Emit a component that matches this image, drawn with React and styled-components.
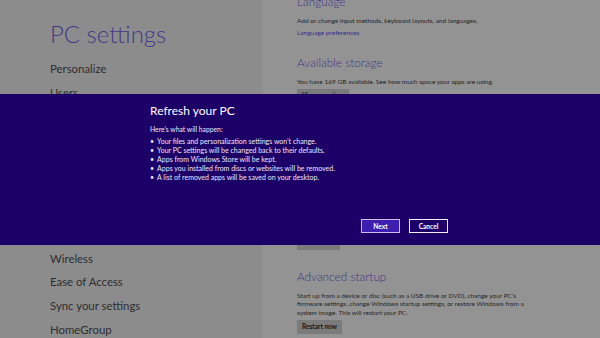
import React from "react"
import styled, { createGlobalStyle } from "styled-components"

const navItems = [
  "Personalize",
  "Users",
  "Notifications",
  "Search",
  "Share",
  "General",
  "Privacy",
  "Devices",
  "Wireless",
  "Ease of Access",
  "Sync your settings",
  "HomeGroup",
  "Windows Update",
]

const bullets = [
  "Your files and personalization settings won’t change.",
  "Your PC settings will be changed back to their defaults.",
  "Apps from Windows Store will be kept.",
  "Apps you installed from discs or websites will be removed.",
  "A list of removed apps will be saved on your desktop.",
]

const App = () => {
  return (
    <>
      <GlobalStyle />
      <Screen>
        <LeftPane>
          <Title>PC settings</Title>
          <Nav>
            {navItems.map((item) => (
              <NavItem key={item}>{item}</NavItem>
            ))}
          </Nav>
        </LeftPane>
        <RightPane>
          <Scroller>
            <Section>
              <Heading>Language</Heading>
              <Text>Add or change input methods, keyboard layouts, and languages.</Text>
              <Link>Language preferences</Link>
            </Section>
            <Section>
              <Heading>Available storage</Heading>
              <Text>You have 169 GB available. See how much space your apps are using.</Text>
              <GrayButton>View app sizes</GrayButton>
            </Section>
            <Section>
              <Heading>Refresh your PC without affecting your files</Heading>
              <Text>
                If your PC isn’t running well, you can refresh it without losing your photos,
                music, videos, and other personal files.
              </Text>
              <GrayButton>Get started</GrayButton>
            </Section>
            <Section last>
              <Heading>Remove everything and reinstall Windows</Heading>
              <Text>
                If you want to recycle your PC or start over completely, you can reset it to its
                factory settings.
              </Text>
              <GrayButton>Get started</GrayButton>
            </Section>
            <Section>
              <Heading>Advanced startup</Heading>
              <Text>
                Start up from a device or disc (such as a USB drive or DVD), change your PC’s
                firmware settings, change Windows startup settings, or restore Windows from a
                system image. This will restart your PC.
              </Text>
              <GrayButton>Restart now</GrayButton>
            </Section>
          </Scroller>
        </RightPane>

        <Overlay>
          <Band>
            <Dialog>
              <DialogTitle>Refresh your PC</DialogTitle>
              <Intro>Here’s what will happen:</Intro>
              <BulletList>
                {bullets.map((b) => (
                  <li key={b}>{b}</li>
                ))}
              </BulletList>
              <Actions>
                <DialogButton primary>Next</DialogButton>
                <DialogButton>Cancel</DialogButton>
              </Actions>
            </Dialog>
          </Band>
        </Overlay>
      </Screen>
    </>
  )
}

const GlobalStyle = createGlobalStyle`
  html, body {
    margin: 0;
    padding: 0;
    width: 600px;
    height: 338px;
    overflow: hidden;
    font-family: Lato, "Open Sans", sans-serif;
  }
`

const Screen = styled.div`
  position: relative;
  width: 600px;
  height: 338px;
  display: grid;
  grid-template-columns: 262px 1fr;
  overflow: hidden;
`

const LeftPane = styled.div`
  background: #8c8c8c;
  padding: 17px 0 0 50px;
`

const Title = styled.h1`
  margin: 0;
  font-size: 24px;
  font-weight: 300;
  line-height: 34px;
  color: #433a88;
`

const Nav = styled.ul`
  list-style: none;
  margin: 6px 0 0;
  padding: 0;
`

const NavItem = styled.li`
  height: 23.7px;
  line-height: 23.7px;
  font-size: 11.4px;
  color: #2e2e2e;
`

const RightPane = styled.div`
  background: #939393;
  padding-left: 35px;
  overflow: hidden;
`

const Scroller = styled.div`
  margin-top: -6px;
  width: 228px;
`

const Section = styled.section`
  margin-bottom: ${(p) => (p.last ? "19px" : "17px")};
`

const Heading = styled.h2`
  margin: 0 0 7px;
  font-size: 11.8px;
  font-weight: 300;
  line-height: 16px;
  color: #3d3584;
  white-space: nowrap;
`

const Text = styled.p`
  margin: 0;
  font-size: 6.5px;
  line-height: 8.6px;
  color: #262626;
`

const Link = styled.div`
  margin-top: 3.5px;
  font-size: 6.5px;
  line-height: 8.6px;
  color: #3b2f8c;
`

const GrayButton = styled.div`
  width: fit-content;
  margin-top: 2.4px;
  height: 14px;
  line-height: 14px;
  padding: 0 5px;
  background: #7b7b7b;
  color: #161616;
  font-size: 6.5px;
  font-weight: 700;
`

const Overlay = styled.div`
  position: absolute;
  inset: 0;
  display: flex;
  align-items: center;
`

const Band = styled.div`
  width: 100%;
  height: 151px;
  background: #1c0067;
  display: flex;
  justify-content: center;
`

const Dialog = styled.div`
  width: 300px;
  padding-top: 8px;
  color: #ece8f6;
`

const DialogTitle = styled.h2`
  margin: 0;
  font-size: 12px;
  font-weight: 400;
  line-height: 18px;
  color: #ffffff;
`

const Intro = styled.div`
  margin-top: 5px;
  font-size: 6.8px;
  line-height: 9px;
`

const BulletList = styled.ul`
  list-style: none;
  margin: 3.5px 0 0;
  padding: 0;
  font-size: 7px;
  line-height: 9.1px;

  li::before {
    content: "•";
    margin-right: 3px;
  }
`

const Actions = styled.div`
  display: flex;
  justify-content: flex-end;
  gap: 9px;
  margin-top: 37px;
  padding-right: 2px;
`

const DialogButton = styled.button`
  width: 39px;
  height: 14px;
  padding: 0;
  border: 1px solid ${(p) => (p.primary ? "#c9bff0" : "#f2f0fa")};
  background: ${(p) => (p.primary ? "#3c1fb0" : "#1c0067")};
  color: #ffffff;
  font-family: inherit;
  font-size: 6.6px;
  font-weight: 700;
  line-height: 12px;
`

export default App
